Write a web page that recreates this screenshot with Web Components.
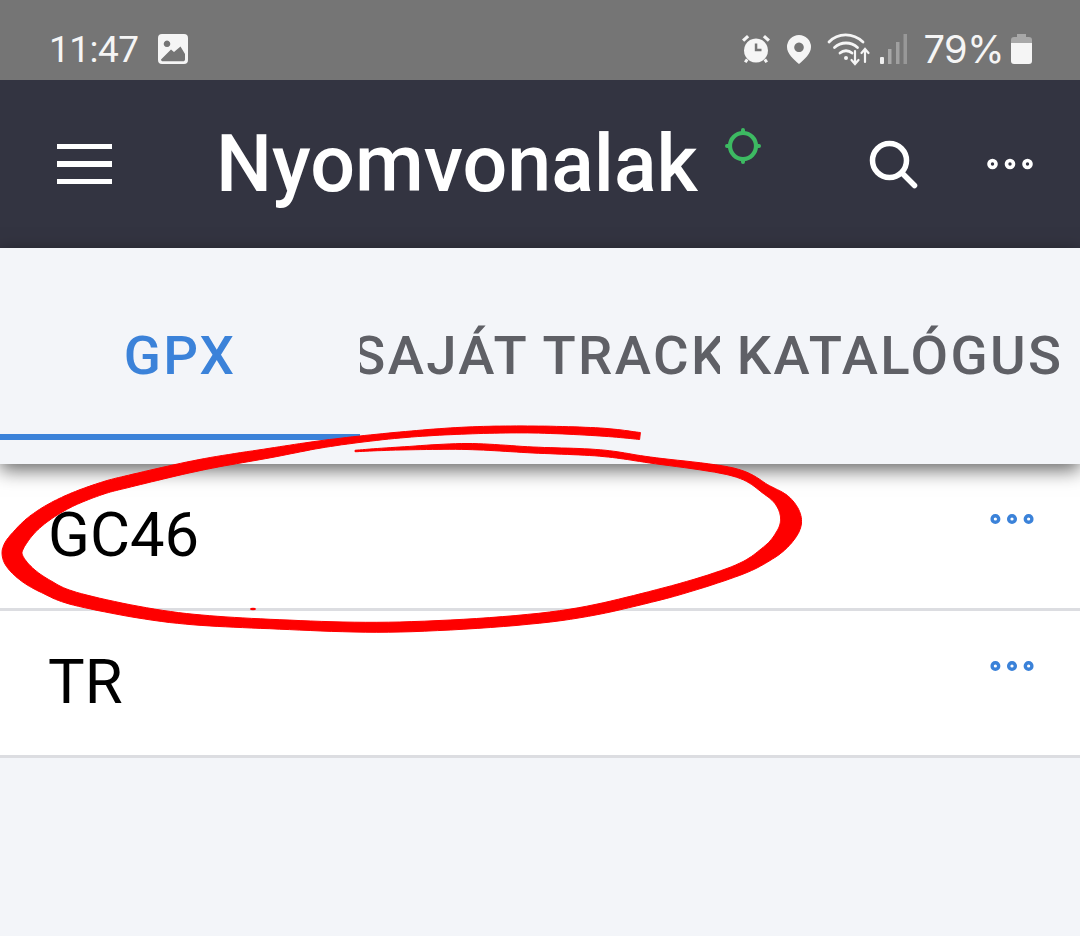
<!DOCTYPE html>
<html>
<head>
<meta charset="utf-8">
<title>Nyomvonalak</title>
<style>
  html, body { margin: 0; height: 100%; }
  body { background: #f3f5f9; font-family: Roboto, "Liberation Sans", sans-serif; position: relative; overflow: hidden; }
</style>
</head>
<body>
<status-bar></status-bar>
<app-header>Nyomvonalak</app-header>
<tab-bar>
  <tab-item active>GPX</tab-item>
  <tab-item>SAJÁT TRACK</tab-item>
  <tab-item>KATALÓGUS</tab-item>
</tab-bar>
<track-row>GC46</track-row>
<track-row>TR</track-row>
<red-mark></red-mark>

<script>
class StatusBar extends HTMLElement {
  constructor() {
    super();
    this.attachShadow({ mode: "open" });
    this.shadowRoot.innerHTML = `
    <style>
      :host { display: flex; justify-content: space-between; align-items: center; height: 80px; box-sizing: border-box; padding: 18px 48px 0 49px; background: #757575; color: #f5f5f5; }
      .side { display: flex; align-items: center; }
      .time { font: 400 37px/1 Roboto, sans-serif; letter-spacing: -.5px; }
      .pct { font: 400 38px/1 Inter, Roboto, sans-serif; letter-spacing: -.5px; }
      svg { display: block; }
      .img { margin-left: 18px; }
      .alarm { margin-right: 16px; }
      .pin { margin-right: 16px; }
      .wifi { margin-right: 9px; }
      .signal { margin-right: 16px; }
      .batt { margin-left: 7px; }
    </style>
    <div class="side">
      <span class="time">11:47</span>
      <svg class="img" width="32" height="32" viewBox="0 0 32 32">
        <path fill="#f5f5f5" fill-rule="evenodd" d="M5 1h22a4 4 0 0 1 4 4v22a4 4 0 0 1-4 4H5a4 4 0 0 1-4-4V5a4 4 0 0 1 4-4zM10 7.500a3.300 3.300 0 1 0 .01 0zM4 26.500c0 1.200.8 1.800 2 1.800h20c1.200 0 2-.6 2-1.800v-5.500l-4.500-7.500-6.500 5.500-3-2.500z"/>
      </svg>
    </div>
    <div class="side">
      <svg class="alarm" width="30" height="30" viewBox="0 0 30 30" fill="#f5f5f5">
        <path fill-rule="evenodd" d="M15 4.500a12 12 0 1 1-.01 0zM13.800 9.500v7.700h6.700v-2.400h-4.200v-5.300z"/>
        <path d="M1 5.500 6 1l2.200 2.300-5 4.500zM29 5.500 24 1l-2.200 2.300 5 4.500zM5 24.500l2.400 1.800L5.500 29 3 27.400zM25 24.500l-2.400 1.800L24.500 29 27 27.400z"/>
      </svg>
      <svg class="pin" width="24" height="29" viewBox="0 0 24 29">
        <path fill="#f5f5f5" fill-rule="evenodd" d="M12 0a12 12 0 0 1 12 12c0 6.500-6.500 12.500-12 17C6.500 24.500 0 18.500 0 12A12 12 0 0 1 12 0zM12 7.500a4.800 4.800 0 1 0 .01 0z"/>
      </svg>
      <svg class="wifi" width="44" height="34" viewBox="0 0 44 34" fill="none" stroke="#f5f5f5" stroke-linecap="round">
        <path stroke-width="2.800" d="M2 10C11 .5 26 .5 36 10"/>
        <path stroke-width="2.800" d="M7.500 15.500c6.500-6 16.500-6 23 0"/>
        <path stroke-width="2.800" d="M13 21c3.500-3 8.500-3 12 0"/>
        <circle cx="19" cy="26" r="2" fill="#f5f5f5" stroke="none"/>
        <path stroke-width="2.200" d="M28 19v13M24.500 28l3.500 4 3.500-4M38 30V17M34.500 21l3.500-4 3.500 4"/>
      </svg>
      <svg class="signal" width="27" height="30" viewBox="0 0 27 30">
        <rect x="0" y="23" width="4" height="7" rx="1" fill="#f0f0f0"/>
        <rect x="8" y="15" width="3.500" height="15" fill="#a8a8a8"/>
        <rect x="16" y="8" width="3.500" height="22" fill="#a0a0a0"/>
        <rect x="23.500" y="0" width="3.500" height="30" fill="#989898"/>
      </svg>
      <span class="pct">79%</span>
      <svg class="batt" width="21" height="30" viewBox="0 0 21 30">
        <path fill="#a8a8a8" d="M6 0h9v3h3a3 3 0 0 1 3 3v3H0V6a3 3 0 0 1 3-3h3z"/>
        <path fill="#f5f5f5" d="M0 9h21v18a3 3 0 0 1-3 3H3a3 3 0 0 1-3-3z"/>
      </svg>
    </div>`;
  }
}

class AppHeader extends HTMLElement {
  constructor() {
    super();
    this.attachShadow({ mode: "open" });
    this.shadowRoot.innerHTML = `
    <style>
      :host { display: flex; align-items: center; height: 168px; box-sizing: border-box; padding: 0 47px 0 57px; background: #333441; color: #fff; }
      .menu { display: flex; flex-direction: column; gap: 12px; width: 55px; margin-right: 104px; }
      .menu i { display: block; height: 5.500px; background: #fff; }
      .title { font: 500 79px/1 Roboto, sans-serif; }
      .gps { align-self: flex-start; margin: 47px 0 0 26px; display: block; }
      .right { margin-left: auto; display: flex; align-items: center; }
      .search { margin-right: 68px; margin-top: 2px; display: block; }
    </style>
    <div class="menu"><i></i><i></i><i></i></div>
    <span class="title"><slot></slot></span>
    <svg class="gps" width="38" height="38" viewBox="0 0 38 38" fill="none" stroke="#3dba62">
      <circle cx="19" cy="19" r="13" stroke-width="4.200"/>
      <path stroke-width="4" stroke-linecap="round" d="M19 3v3M19 32v3M3 19h3M32 19h3"/>
    </svg>
    <div class="right">
      <svg class="search" width="50" height="50" viewBox="0 0 50 50" fill="none" stroke="#fff" stroke-width="5.500" stroke-linecap="round">
        <circle cx="20.500" cy="20.500" r="17"/>
        <path d="M33 33l12.500 12.500"/>
      </svg>
      <dots-icon color="#fff"></dots-icon>
    </div>`;
  }
}

class DotsIcon extends HTMLElement {
  constructor() {
    super();
    this.attachShadow({ mode: "open" });
    const c = this.getAttribute("color") || "#fff";
    this.shadowRoot.innerHTML = `
    <style>
      :host { display: block; width: 46px; height: 12px; }
      :host([small]) svg { transform: scale(.95); }
      svg { display: block; }
    </style>
    <svg width="46" height="12" viewBox="0 0 46 12" fill="none" stroke="${c}" stroke-width="3.600">
      <circle cx="5.500" cy="6" r="3.500"/>
      <circle cx="23" cy="6" r="3.500"/>
      <circle cx="40.500" cy="6" r="3.500"/>
    </svg>`;
  }
}

class TabBar extends HTMLElement {
  constructor() {
    super();
    this.attachShadow({ mode: "open" });
    this.shadowRoot.innerHTML = `
    <style>
      :host { display: grid; grid-template-columns: repeat(3, 360px); height: 216px; background: #f3f5f9; position: relative; z-index: 1; box-shadow: 0 6px 18px rgba(0,0,0,.6); }
    </style>
    <slot></slot>`;
  }
}

class TabItem extends HTMLElement {
  constructor() {
    super();
    this.attachShadow({ mode: "open" });
    this.shadowRoot.innerHTML = `
    <style>
      :host { display: block; height: 192px; box-sizing: border-box; padding-top: 77px; overflow: hidden; white-space: nowrap; color: #5f6066; border-bottom: 6px solid transparent; font: 500 54.500px/60px Roboto, sans-serif; letter-spacing: 2.400px; }
      :host([active]) { color: #3b82d9; border-bottom-color: #3b82d9; }
      .inner { display: flex; justify-content: center; }
      .inner span { flex: none; }
    </style>
    <div class="inner"><span><slot></slot></span></div>`;
  }
}

class TrackRow extends HTMLElement {
  constructor() {
    super();
    this.attachShadow({ mode: "open" });
    this.shadowRoot.innerHTML = `
    <style>
      :host { display: flex; justify-content: space-between; align-items: flex-start; height: 147px; box-sizing: border-box; padding: 0 45px 0 48px; background: #fff; border-bottom: 3px solid #dcdde1; color: #000; font: 400 61.500px/1 Roboto, sans-serif; }
      .name { margin-top: 41px; }
      dots-icon { margin-top: 49px; }
    </style>
    <span class="name"><slot></slot></span>
    <dots-icon small color="#3b82d9"></dots-icon>`;
  }
}

// freehand marker around the first row: centre line of the stroke as x, y, width
const MARK = [[640,436,7],[600,432,8],[533,429.5,7],[467,430.5,7],[400,435,6],[330,443,7],[270,453,9.5],[200,465,11],[130,481,12],[100,489,12],[67,502,13],[40,518,15],[22,535,17],[12,553,20],[22,570,18],[45,586,15],[80,600,13],[170,617,11],[270,624,9.5],[400,627,10],[550,617,10],[650,597,11],[733,572,11],[768,553,15],[785,536,19],[791,520,21],[784,503,16],[767,490,10],[733,472,8],[650,460,6],[600,453,6.5],[533,450,6],[467,446.5,6],[400,448.5,3],[355,451,1.5]];

function markOutline(pts) {
  const line = [];
  for (let i = 0; i < pts.length - 1; i++) {
    const p0 = pts[Math.max(i - 1, 0)], p1 = pts[i], p2 = pts[i + 1], p3 = pts[Math.min(i + 2, pts.length - 1)];
    for (let s = 0; s < 12; s++) {
      const t = s / 12;
      const cr = k => .5 * (2 * p1[k] + (p2[k] - p0[k]) * t + (2 * p0[k] - 5 * p1[k] + 4 * p2[k] - p3[k]) * t * t + (3 * p1[k] - p0[k] - 3 * p2[k] + p3[k]) * t * t * t);
      line.push([cr(0), cr(1), cr(2)]);
    }
  }
  line.push(pts[pts.length - 1]);
  const left = [], right = [];
  line.forEach((p, i) => {
    const a = line[Math.max(i - 1, 0)], b = line[Math.min(i + 1, line.length - 1)];
    const dx = b[0] - a[0], dy = b[1] - a[1], len = Math.hypot(dx, dy) || 1;
    const nx = -dy / len * p[2] / 2, ny = dx / len * p[2] / 2;
    left.push((p[0] + nx).toFixed(1) + " " + (p[1] + ny).toFixed(1));
    right.unshift((p[0] - nx).toFixed(1) + " " + (p[1] - ny).toFixed(1));
  });
  return "M" + left.concat(right).join("L") + "Z";
}

class RedMark extends HTMLElement {
  constructor() {
    super();
    this.attachShadow({ mode: "open" });
    this.shadowRoot.innerHTML = `
    <style>
      :host { position: absolute; left: 0; top: 0; width: 1080px; height: 936px; z-index: 2; pointer-events: none; }
      svg { display: block; }
    </style>
    <svg width="1080" height="936" viewBox="0 0 1080 936">
      <path fill="#fe0000" stroke="#fe0000" stroke-width="1" stroke-linejoin="round" d="${markOutline(MARK)}"/>
      <ellipse cx="253" cy="609" rx="3" ry="1.200" fill="#fe0000"/>
    </svg>`;
  }
}

customElements.define("dots-icon", DotsIcon);
customElements.define("status-bar", StatusBar);
customElements.define("app-header", AppHeader);
customElements.define("tab-bar", TabBar);
customElements.define("tab-item", TabItem);
customElements.define("track-row", TrackRow);
customElements.define("red-mark", RedMark);
</script>
</body>
</html>
